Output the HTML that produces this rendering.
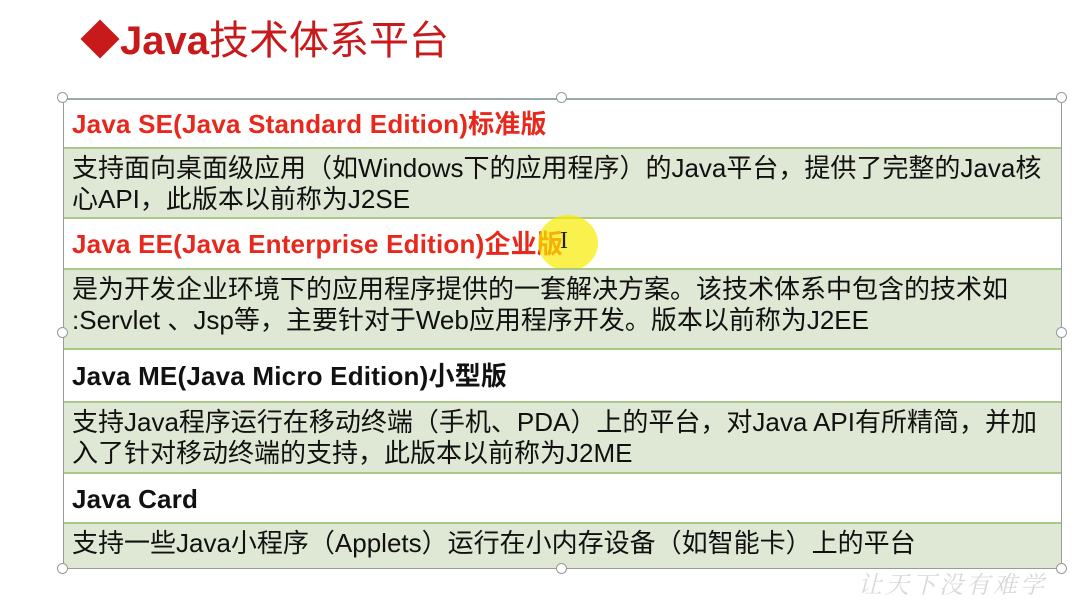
<!DOCTYPE html>
<html><head><meta charset="utf-8"><style>
body{margin:0;width:1089px;height:597px;background:#fff;position:relative;overflow:hidden;font-family:"Liberation Sans","Noto Sans CJK SC",sans-serif;}
.t{position:absolute;left:80px;top:8px;font-size:40px;color:#c8191b;font-weight:bold;white-space:nowrap}
.t span{font-weight:normal}
.row{position:absolute;left:63px;width:999px;box-sizing:border-box;border-top:2px solid #a9c98a;padding-left:9px;font-size:26px;color:#111;white-space:nowrap;letter-spacing:0px}
.h{background:#fff;font-weight:bold;font-size:26px;letter-spacing:0.2px}
.d{background:#dfe8d4;line-height:31px;padding-top:4px}
.r{color:#e8281c}
.frame{position:absolute;left:63px;top:98px;width:999px;height:471px;box-sizing:border-box;border:1.5px solid #9a9a9a;border-top:2px solid #9aa;}
.hd{position:absolute;width:11px;height:11px;border-radius:50%;border:1.5px solid #999;background:#fff;box-sizing:border-box;margin:-6px 0 0 -6px}
</style></head><body>
<div class="t">◆Java<span>技术体系平台</span></div>
<div class="row h r" style="top:98px;height:49px;line-height:49px">Java SE(Java Standard Edition)标准版</div>
<div class="row d" style="top:147px;height:70px">支持面向桌面级应用（如Windows下的应用程序）的Java平台，提供了完整的Java核<br>心API，此版本以前称为J2SE</div>
<div class="row h r" style="top:217px;height:51px;line-height:51px">Java EE(Java Enterprise Edition)企业版</div>
<div style="position:absolute;left:538px;top:215px;width:60px;height:56px;border-radius:50%;background:rgba(250,235,0,0.7)"></div>
<div style="position:absolute;left:560px;top:228px;font-size:24px;color:#222;font-family:'Liberation Serif',serif">I</div>
<div class="row d" style="top:268px;height:80px">是为开发企业环境下的应用程序提供的一套解决方案。该技术体系中包含的技术如<br>:Servlet 、Jsp等，主要针对于Web应用程序开发。版本以前称为J2EE</div>
<div class="row h" style="top:348px;height:53px;line-height:53px">Java ME(Java Micro Edition)小型版</div>
<div class="row d" style="top:401px;height:71px">支持Java程序运行在移动终端（手机、PDA）上的平台，对Java API有所精简，并加<br>入了针对移动终端的支持，此版本以前称为J2ME</div>
<div class="row h" style="top:472px;height:50px;line-height:50px">Java Card</div>
<div class="row d" style="top:522px;height:47px">支持一些Java小程序（Applets）运行在小内存设备（如智能卡）上的平台</div>
<div class="frame"></div>
<div class="hd" style="left:63px;top:98px"></div><div class="hd" style="left:562px;top:98px"></div><div class="hd" style="left:1062px;top:98px"></div>
<div class="hd" style="left:63px;top:333px"></div><div class="hd" style="left:1062px;top:333px"></div>
<div class="hd" style="left:63px;top:569px"></div><div class="hd" style="left:562px;top:569px"></div><div class="hd" style="left:1062px;top:569px"></div>
<div style="position:absolute;left:858px;top:565px;font-size:24px;color:#d8d8d8;font-style:italic;letter-spacing:3px;white-space:nowrap;font-family:'Noto Serif CJK SC',serif">让天下没有难学</div>
</body></html>
